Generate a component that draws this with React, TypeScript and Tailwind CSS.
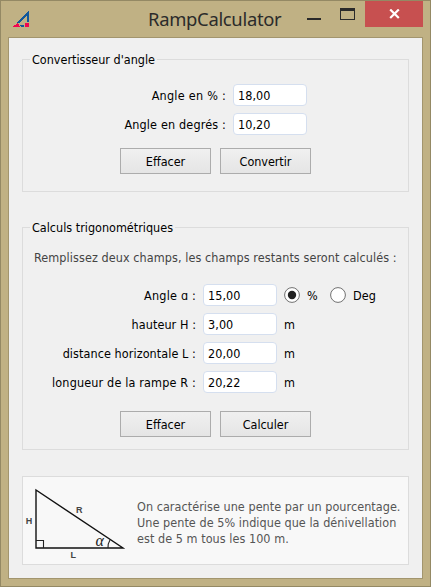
import type { ReactNode } from "react";

function Group({ title, className, children }: { title: string; className: string; children: ReactNode }) {
  return (
    <section className={`relative flex w-[387px] shrink-0 flex-col border border-[#dcdcdc] ${className}`}>
      <h2 className="absolute -top-[8px] left-[7px] h-4 bg-[#f0f0f0] px-[2px] leading-4 tracking-[0px] whitespace-nowrap">{title}</h2>
      {children}
    </section>
  );
}

function Field({ label, value, labelClass, children }: { label: string; value: string; labelClass: string; children?: ReactNode }) {
  return (
    <div className="flex h-[22px] items-center">
      <label className={`shrink-0 pt-[2px] text-right whitespace-nowrap ${labelClass}`}>{label}</label>
      <input
        aria-label={label}
        defaultValue={value}
        className="h-[22px] w-[74px] shrink-0 rounded-[4px] border border-[#d5dfef] bg-white pt-px pl-1 outline-none"
      />
      {children}
    </div>
  );
}

function Button({ children }: { children: ReactNode }) {
  return (
    <button className="h-[26px] w-[91px] border border-[#acacac] bg-linear-to-b from-[#f0f0f0] to-[#e5e5e5] pt-px text-center leading-[24px] tracking-[-0.05px]">
      {children}
    </button>
  );
}

function Radio({ checked = false }: { checked?: boolean }) {
  return (
    <svg width="16" height="16" viewBox="0 0 16 16" className="shrink-0">
      <circle cx="8" cy="8" r="7.4" fill="#fff" stroke="#707070" strokeWidth="1" />
      {checked && <circle cx="8" cy="8" r="4.2" fill="#212121" />}
    </svg>
  );
}

function Logo() {
  return (
    <svg width="17" height="17" viewBox="0 0 17 17" shapeRendering="crispEdges">
      <path d="M15 0h1v11h-2V4L6 12H4v-1z" fill="#12589b" />
      <path d="M0 15h1v-1h2v-1h1v-1h1v1h1v2h1v1H0zM12 12h4v4h-4z" fill="#f2054f" />
      <path d="M7 14h4v2H8v-1H7z" fill="#12589b" />
    </svg>
  );
}

function Triangle() {
  return (
    <svg width="106" height="87" viewBox="23 477 106 87" className="shrink-0">
      <path d="M36 490V548H123Z" fill="none" stroke="#111" strokeWidth="1.4" />
      <path d="M36 540.5H43.5V548M110 540Q107.5 544 108 548" fill="none" stroke="#222" strokeWidth="1.1" />
      <g fill="#444" fontFamily="Liberation Sans, sans-serif" fontSize="9" fontWeight="bold" letterSpacing="0">
        <text x="25.7" y="524">H</text>
        <text x="76" y="513">R</text>
        <text x="70.5" y="557.5">L</text>
      </g>
      <text x="95.5" y="546" fill="#222" fontFamily="Liberation Serif, serif" fontSize="16" fontStyle="italic">α</text>
    </svg>
  );
}

export default function App() {
  return (
    <main className="flex h-[587px] w-[431px] flex-col border border-[#948964] bg-[#c0b184] px-[7px] font-['DejaVu_Sans_Condensed','DejaVu_Sans',sans-serif] text-[12.5px] leading-4 tracking-[0.08px] text-black [font-stretch:condensed]">
      <header className="flex h-9 shrink-0 items-start">
        <div className="w-[140px] shrink-0 pt-[10px] pl-[5px]"><Logo /></div>
        <h1 className="w-[140px] shrink-0 pt-[5px] font-['Noto_Sans',sans-serif] text-[18.4px] leading-[26px] tracking-[-0.3px] whitespace-nowrap text-[#2b2b2b]">RampCalculator</h1>
        <button aria-label="Réduire" className="mt-[17px] ml-[19px] h-[2px] w-[14px] bg-[#2a2a2a]" />
        <button aria-label="Agrandir" className="mt-[7px] ml-[19px] h-3 w-[15px] border border-t-[3px] border-[#2a2a2a]" />
        <button aria-label="Fermer" className="ml-[10px] flex h-[26px] w-[58px] items-center justify-center bg-[#c75050]">
          <svg width="11" height="10" viewBox="0 0 11 10"><path d="M1.2.5 9.8 9M9.8.5 1.2 9" stroke="#fff" strokeWidth="2.2" /></svg>
        </button>
      </header>

      <div className="flex h-[542px] w-[415px] shrink-0 flex-col border border-[#a2956e] bg-[#f0f0f0] px-[13px] pt-[21px]">
        <Group title="Convertisseur d'angle" className="h-[133px]">
          <div className="mt-6 flex flex-col gap-[7px]">
            <Field label="Angle en % :" value="18,00" labelClass="w-[210px] pr-[7px] tracking-[0.26px]" />
            <Field label="Angle en degrés :" value="10,20" labelClass="w-[210px] pr-[7px] tracking-[0.16px]" />
          </div>
          <div className="mt-[13px] ml-[97px] flex gap-[9px]">
            <Button>Effacer</Button>
            <Button>Convertir</Button>
          </div>
        </Group>

        <Group title="Calculs trigonométriques" className="mt-[35px] h-[223px]">
          <p className="mt-[22px] ml-[11px] whitespace-nowrap text-[#444]">Remplissez deux champs, les champs restants seront calculés :</p>
          <div className="mt-[18px] flex flex-col gap-[7px]">
            <Field label="Angle ɑ :" value="15,00" labelClass="w-[180px] pr-[7px] tracking-[0.2px]">
              <div className="flex items-center pl-[7px]">
                <Radio checked={true} />
                <span className="w-[30px] pt-[2px] pl-[7px]">%</span>
                <Radio />
                <span className="pt-[2px] pl-[7px]">Deg</span>
              </div>
            </Field>
            <Field label="hauteur H :" value="3,00" labelClass="w-[180px] pr-[7px]"><span className="pt-[2px] pl-[7px]">m</span></Field>
            <Field label="distance horizontale L :" value="20,00" labelClass="w-[180px] pr-[7px]"><span className="pt-[2px] pl-[7px]">m</span></Field>
            <Field label="longueur de la rampe R :" value="20,22" labelClass="w-[180px] pr-[7px] tracking-[0.16px]"><span className="pt-[2px] pl-[7px]">m</span></Field>
          </div>
          <div className="mt-[18px] ml-[97px] flex gap-[9px]">
            <Button>Effacer</Button>
            <Button>Calculer</Button>
          </div>
        </Group>

        <section className="mt-[26px] flex h-[89px] w-[387px] shrink-0 border border-[#dcdcdc] bg-[#f8f8f8]">
          <Triangle />
          <p className="mt-[22px] ml-[8px] whitespace-nowrap tracking-[0.05px] text-[#555]">
            On caractérise une pente par un pourcentage.<br />
            Une pente de 5% indique que la dénivellation<br />
            est de 5 m tous les 100 m.
          </p>
        </section>
      </div>
    </main>
  );
}
